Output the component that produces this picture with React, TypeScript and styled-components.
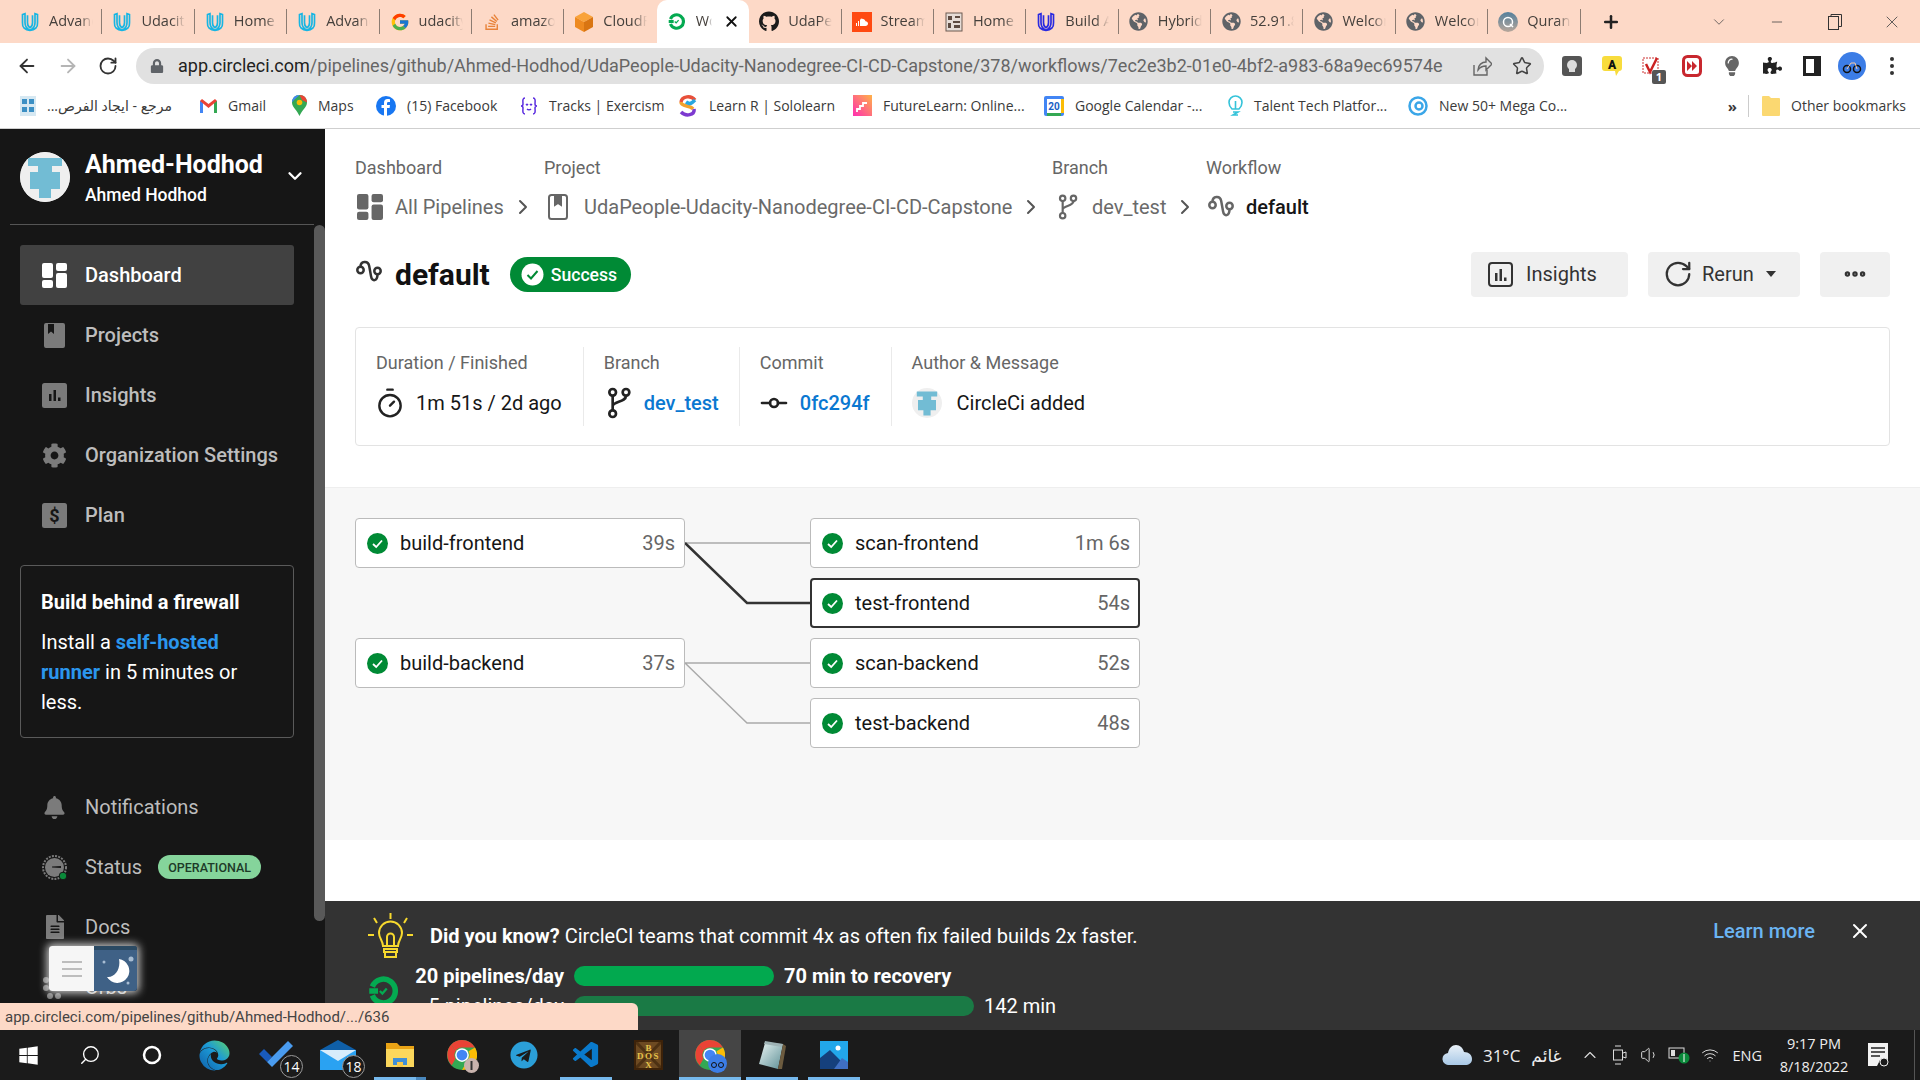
import React from "react";
import styled, { createGlobalStyle } from "styled-components";
import { ArrowLeft, ArrowRight, RotateCw, Star, ChevronDown, ChevronRight, Plus, X, Minus, Timer, GitCommitHorizontal, Search, ChevronUp, Volume1, Wifi, Ellipsis } from "lucide-react";
import { FaLock, FaStackOverflow, FaGithub, FaGlobeAmericas, FaPuzzlePiece, FaLightbulb, FaCog, FaBell, FaFileAlt, FaWindows, FaEdge, FaTelegram } from "react-icons/fa";
import { FcGoogle } from "react-icons/fc";
import { VscVscode } from "react-icons/vsc";

const Global = createGlobalStyle`
  * { box-sizing: border-box; }
  html, body { margin: 0; padding: 0; background: #fff; }
  body { font-family: Roboto, "DejaVu Sans", sans-serif; overflow: hidden; }
`;
const CHROME_FONT = `"Open Sans", "DejaVu Sans", sans-serif`;

const Page = styled.div`width:1920px;height:1080px;display:flex;flex-direction:column;position:relative;overflow:hidden;`;

/* browser chrome */
const TabStrip = styled.div`height:43px;flex:none;background:#fdd9c7;display:flex;align-items:stretch;padding-left:10px;font-family:${CHROME_FONT};`;
const Tab = styled.div<{ $active?: boolean }>`width:92.4px;flex:none;height:43px;padding:9px 0;background:${p => p.$active ? "#fff" : "transparent"};border-radius:${p => p.$active ? "10px 10px 0 0" : "0"};`;
const TabInner = styled.div<{ $sep?: boolean }>`height:25px;display:flex;align-items:center;gap:9px;padding-left:10px;padding-right:8px;border-right:1px solid ${p => p.$sep ? "#8c7c72" : "transparent"};`;
const TabIconBox = styled.span`width:20px;height:22px;flex:none;display:flex;align-items:center;justify-content:center;`;
const TabText = styled.span<{ $w?: number }>`font-size:14.5px;line-height:20px;margin-top:-2px;color:#45403c;white-space:nowrap;overflow:hidden;width:${p => p.$w ?? 44}px;-webkit-mask-image:linear-gradient(90deg,#000 70%,transparent);mask-image:linear-gradient(90deg,#000 70%,transparent);`;
const TabClose = styled.span`display:flex;margin-left:2px;color:#111;`;
const NewTab = styled.span`display:flex;align-items:center;margin-left:20px;color:#222;`;
const WindowButtons = styled.div`margin-left:auto;display:flex;align-items:center;color:#444;`;
const WindowButton = styled.span<{ $w: number }>`width:${p => p.$w}px;display:flex;justify-content:center;`;

const Toolbar = styled.div`height:43px;flex:none;background:#fff;display:flex;align-items:center;padding:2px 0 0 16px;font-family:${CHROME_FONT};`;
const NavButton = styled.span<{ $c?: string }>`width:41px;display:flex;justify-content:flex-start;color:${p => p.$c ?? "#333"};`;
const AddressBar = styled.div`width:1408px;flex:none;height:36px;margin-left:-3px;border-radius:18px;background:#e1e1e1;display:flex;align-items:center;padding-left:14px;padding-right:12px;color:#555;`;
const Url = styled.span`margin-left:14px;font-family:Roboto,sans-serif;font-size:18px;color:#666;white-space:nowrap;`;
const UrlHost = styled.span`color:#222;`;
const AddressActions = styled.span`margin-left:auto;display:flex;gap:20px;color:#555;align-items:center;`;
const Extensions = styled.div`display:flex;align-items:center;margin-left:8px;`;
const ExtSlot = styled.span`width:40px;height:36px;display:flex;align-items:center;justify-content:center;position:relative;`;
const ExtBadge = styled.span`position:absolute;right:6px;bottom:0;width:14px;height:14px;background:#555;border-radius:2px;color:#fff;font-size:11px;font-weight:700;display:flex;align-items:center;justify-content:center;`;

const BookmarkBar = styled.div`height:43px;flex:none;background:#fff;border-bottom:1px solid #cfcfcf;display:flex;align-items:center;padding:0 0 3px 20px;font-family:${CHROME_FONT};font-size:14px;color:#3a3a3a;`;
const Bookmark = styled.span<{ $w: number }>`width:${p => p.$w}px;flex:none;display:flex;align-items:center;gap:11px;white-space:nowrap;overflow:hidden;`;
const OverflowMark = styled.span`margin-left:auto;font-weight:700;font-size:15px;margin-right:11px;`;
const BarSep = styled.span`width:1px;height:22px;background:#ccc;margin-right:13px;`;
const OtherBookmarks = styled.span`display:flex;align-items:center;gap:11px;width:158px;white-space:nowrap;`;

/* body */
const Body = styled.div`flex:1;min-height:0;display:flex;`;
const Sidebar = styled.aside`width:325px;flex:none;background:#161616;display:flex;flex-direction:column;overflow:hidden;`;
const OrgHeader = styled.div`height:96px;flex:none;margin:0 11px 0 10px;border-bottom:1px solid #555;display:flex;align-items:center;padding:0 0 0 10px;`;
const Avatar = styled.span`width:50px;height:50px;border-radius:50%;background:#efefef;flex:none;display:flex;align-items:center;justify-content:center;overflow:hidden;`;
const OrgNames = styled.div`margin-left:15px;padding-top:3px;display:flex;flex-direction:column;gap:4px;color:#fff;flex:1;`;
const OrgName = styled.span`font-size:25px;font-weight:700;line-height:30px;`;
const OrgUser = styled.span`font-size:17.5px;font-weight:500;line-height:22px;`;
const OrgChevron = styled.span`display:flex;color:#fff;margin-right:8px;margin-top:-2px;`;
const SideBody = styled.div`flex:1;min-height:0;display:flex;`;
const SideNav = styled.nav`width:314px;flex:none;padding:20px 20px 0;`;
const ScrollTrack = styled.div`width:11px;flex:none;`;
const ScrollThumb = styled.div`height:696px;border-radius:6px;background:#595959;`;
const NavItem = styled.div<{ $active?: boolean; $plain?: boolean }>`height:60px;display:flex;align-items:center;gap:18px;padding-left:22px;border-radius:3px;font-size:20px;font-weight:${p => p.$plain ? 400 : 500};background:${p => p.$active ? "#414141" : "transparent"};color:${p => p.$active ? "#fff" : "#bdbdbd"};`;
const NavIcon = styled.span<{ $active?: boolean }>`width:25px;height:25px;flex:none;display:flex;align-items:center;justify-content:center;color:${p => p.$active ? "#fff" : "#7b7b7b"};`;
const FirewallBox = styled.div`margin-top:20px;height:173px;border:1px solid #5a5a5a;border-radius:4px;padding:21px 20px 0 20px;color:#fff;font-size:20px;line-height:30px;`;
const FirewallTitle = styled.div`font-weight:700;margin-bottom:10px;`;
const FirewallLink = styled.span`color:#2b96ed;font-weight:700;`;
const BottomNav = styled.div`margin-top:39px;`;
const StatusPill = styled.span`margin-left:-2px;height:24px;padding:0 10px;border-radius:12px;background:#85d49b;color:#1d3a28;font-size:12.5px;font-weight:500;display:flex;align-items:center;`;
const ThemeWidget = styled.div`position:absolute;left:49px;top:946px;width:88px;height:45px;display:flex;border-radius:3px;overflow:hidden;box-shadow:0 0 8px 2px rgba(255,255,255,.8);`;
const ThemeLeft = styled.div`width:45px;background:#f6f6f6;display:flex;flex-direction:column;align-items:center;justify-content:center;gap:5px;`;
const ThemeLine = styled.span`width:20px;height:2px;background:#bdbdbd;`;
const ThemeRight = styled.div`flex:1;background:#3f6186;border-top:4px solid #2b4a63;display:flex;align-items:center;justify-content:center;`;

const Main = styled.main`flex:1;min-width:0;display:flex;flex-direction:column;background:#fff;`;
const Header = styled.section`height:358px;flex:none;padding:27px 30px 0;`;
const Crumbs = styled.div`display:flex;`;
const Crumb = styled.div<{ $w?: number }>`width:${p => p.$w ? p.$w + "px" : "auto"};flex:none;display:flex;flex-direction:column;gap:12px;`;
const CrumbLabel = styled.span`font-size:18px;line-height:24px;color:#666;`;
const CrumbRow = styled.div`height:30px;display:flex;align-items:center;font-size:20px;color:#6a6a6a;`;
const CrumbIcon = styled.span<{ $w: number }>`width:${p => p.$w}px;flex:none;display:flex;color:#666;padding-left:2px;`;
const CrumbCurrent = styled.span`color:#161616;font-weight:500;`;
const CrumbChevron = styled.span`display:flex;margin-left:auto;margin-right:9px;color:#555;`;
const TitleRow = styled.div`margin-top:30px;height:45px;display:flex;align-items:center;`;
const TitleIcon = styled.span`display:flex;margin:-6px 0 0 1px;color:#333;`;
const Title = styled.h1`margin:0 0 0 13px;font-size:30px;font-weight:700;color:#111;`;
const SuccessBadge = styled.span`margin-left:20px;height:35px;padding:0 14px 0 11px;border-radius:18px;background:#008a35;color:#fff;font-size:17.6px;font-weight:500;display:flex;align-items:center;gap:7px;`;
const Actions = styled.div`margin-left:auto;display:flex;gap:20px;`;
const ActionButton = styled.button<{ $w: number; $center?: boolean; $pad?: number; $gap?: number }>`width:${p => p.$w}px;height:45px;border:0;border-radius:4px;background:#f0f0f0;color:#333;font:400 20px Roboto,sans-serif;display:flex;align-items:center;justify-content:${p => p.$center ? "center" : "flex-start"};gap:${p => p.$gap ?? 0}px;padding:0 ${p => p.$pad ?? 0}px 1px;`;
const Caret = styled.span`width:0;height:0;border-left:5.5px solid transparent;border-right:5.5px solid transparent;border-top:6px solid #333;margin-left:3px;`;
const InfoCard = styled.div`margin-top:30px;height:119px;border:1px solid #e3e3e3;border-radius:4px;padding:19px 0;display:flex;`;
const InfoCol = styled.div<{ $right?: number }>`padding:0 ${p => p.$right ?? 20}px 0 20px;border-right:1px solid #eaeaea;display:flex;flex-direction:column;gap:13px;height:79px;&:last-child{border-right:0;}`;
const InfoLabel = styled.span`font-size:18px;line-height:24px;color:#666;padding-top:4px;`;
const InfoValue = styled.div<{ $gap?: number }>`height:30px;display:flex;align-items:center;gap:${p => p.$gap ?? 12}px;font-size:20px;color:#161616;`;
const InfoLink = styled.span`color:#0a78d1;font-weight:500;`;
const InfoIcon = styled.span`display:flex;color:#222;margin:0 -2px;`;

const GraphArea = styled.section`height:353px;flex:none;background:#f7f7f7;border-top:1px solid #eee;padding:30px 30px 0;`;
const Graph = styled.div`display:grid;grid-template-columns:330px 125px 330px;grid-auto-rows:50px;row-gap:10px;width:785px;`;
const Job = styled.div<{ $col: number; $row: number; $selected?: boolean }>`grid-column:${p => p.$col};grid-row:${p => p.$row};background:#fff;border:${p => p.$selected ? "2.5px solid #333" : "1px solid #bbb"};border-radius:4px;display:flex;align-items:center;padding:0 ${p => p.$selected ? 8 : 9}px 0 ${p => p.$selected ? 10 : 11}px;font-size:20px;color:#161616;`;
const JobName = styled.span`margin-left:12px;flex:1;`;
const JobTime = styled.span`color:#666;`;
const Connector = styled.svg`grid-column:2;grid-row:1 / span 4;width:125px;height:230px;`;

const Spacer = styled.div`flex:1;`;
const Banner = styled.section`height:129px;flex:none;background:#333;padding:12px 48px 0 43px;color:#fff;font-size:20px;overflow:hidden;`;
const BannerTop = styled.div`height:46px;display:flex;align-items:center;gap:17px;`;
const BannerText = styled.div`flex:1;margin-top:0;`;
const Strong = styled.strong`font-weight:700;`;
const LearnMore = styled.span`color:#6bb4f2;font-weight:500;margin-bottom:10px;`;
const BannerClose = styled.span`display:flex;margin:0 0 10px 16px;`;
const Metrics = styled.div`margin-top:7px;display:flex;`;
const MetricsIcon = styled.span`width:30px;flex:none;margin-top:10px;display:flex;`;
const MetricsRows = styled.div`display:grid;grid-template-columns:166px auto;column-gap:10px;row-gap:10px;grid-auto-rows:20px;align-items:center;`;
const MetricName = styled.span<{ $bold?: boolean }>`text-align:right;font-weight:${p => p.$bold ? 700 : 400};white-space:nowrap;`;
const MetricBarRow = styled.div`display:flex;align-items:center;gap:10px;`;
const MetricBar = styled.span<{ $w: number; $c: string }>`display:block;height:20px;width:${p => p.$w}px;border-radius:10px;background:${p => p.$c};`;
const MetricValue = styled.span<{ $bold?: boolean }>`font-weight:${p => p.$bold ? 700 : 400};white-space:nowrap;`;

const StatusTip = styled.div`position:absolute;left:0;bottom:50px;width:638px;height:27px;background:#fdd9c7;border-radius:0 6px 0 0;padding-left:5px;display:flex;align-items:center;font-size:15px;color:#444;font-family:Roboto,sans-serif;white-space:nowrap;`;

/* taskbar */
const Taskbar = styled.footer`height:50px;flex:none;background:#1b1b1b;display:flex;align-items:stretch;padding-left:0;color:#fff;font-family:${CHROME_FONT};`;
const TaskLeft = styled.div`display:flex;margin-left:-3px;`;
const TaskSlot = styled.div<{ $active?: boolean }>`width:62px;height:50px;position:relative;display:flex;align-items:center;justify-content:center;background:${p => p.$active ? "#454545" : "transparent"};`;
const TaskLine = styled.span<{ $full?: boolean; $stack?: boolean }>`position:absolute;bottom:0;left:${p => p.$full ? 0 : 5}px;right:${p => p.$full ? 0 : 5}px;height:3px;background:#76b9ed;border-right:${p => p.$stack ? "10px solid #4a88bd" : "0"};`;
const TaskBadge = styled.span`position:absolute;right:4px;bottom:2px;width:23px;height:23px;border-radius:50%;background:#1b1b1b;border:1px solid #999;font-size:14px;display:flex;align-items:center;justify-content:center;`;
const ChromeBadge = styled.span`position:absolute;right:14px;bottom:7px;display:flex;`;
const Tray = styled.div`margin-left:auto;display:flex;align-items:center;padding-right:5px;font-size:14.5px;color:#eee;`;
const Weather = styled.span`display:flex;align-items:center;gap:11px;font-size:17px;margin-right:14px;`;
const TrayIcon = styled.span<{ $w: number }>`width:${p => p.$w}px;display:flex;justify-content:center;color:#ddd;`;
const TrayLang = styled.span`margin-left:7px;`;
const TrayClock = styled.div`width:100px;display:flex;flex-direction:column;align-items:center;gap:3px;font-size:14.5px;line-height:20px;margin-left:2px;`;
const TrayNote = styled.span`display:flex;margin-left:4px;margin-right:25px;`;
const TrayEdge = styled.span`width:1px;height:50px;background:#555;`;

/* drawings */
const UdacityLogo = ({ c = "#17b5e3", s = 20 }: { c?: string; s?: number }) => (
  <svg width={s} height={s} viewBox="0 0 24 24" fill="none" stroke={c} strokeWidth="2"><path d="M3 3l3-1v11c0 4 2 7 6 9-6 0-9.500-4-9-9z" /><path d="M21 3l-3-1v11c0 4-2 7-6 9 6 0 9.500-4 9-9z" /><path d="M9 4v9c0 3 1 5 3 6 2-1 3-3 3-6V4" /></svg>
);
const CircleCiMark = ({ s = 20, c = "#04aa51" }: { s?: number; c?: string }) => (
  <svg width={s} height={s} viewBox="0 0 24 24" fill="none"><path d="M3.500 8.500a9.500 9.500 0 1 1 0 7" stroke={c} strokeWidth="4.400" /><path d="M1 12h7" stroke={c} strokeWidth="4.400" /><path d="M9.500 12l2 2 3.500-4" stroke={c} strokeWidth="1.800" /></svg>
);
const CloudBox = () => (
  <svg width="20" height="22" viewBox="0 0 20 22"><path d="M10 1l9 5-9 5-9-5z" fill="#f9a33a" /><path d="M1 6l9 5v10l-9-5z" fill="#ee8a20" /><path d="M19 6l-9 5v10l9-5z" fill="#d97512" /></svg>
);
const SoundBox = () => (
  <svg width="20" height="20" viewBox="0 0 20 20"><rect width="20" height="20" fill="#ff4a12" /><path d="M4 14v-3h1v3zm2 0V9h1v5zm2 0V8l1-1.500 1 .2c2 0 3 1 3.500 2.500 1.500 0 2.500 1 2.500 2.400s-1 2.400-2.500 2.400z" fill="#fff" /></svg>
);
const QrBox = () => (
  <svg width="18" height="20" viewBox="0 0 18 20"><rect x="1" y="1" width="16" height="18" fill="#e6dcd6" stroke="#6c5a50" /><path d="M3 4h4v4H3zm7 0h5v2h-5zM3 11h3v5H3zm5-2h7v2H8zm1 4h6v3H9z" fill="#5d4a40" /></svg>
);
const QuranLogo = () => (
  <svg width="20" height="20" viewBox="0 0 20 20"><defs><linearGradient id="qg" x1="0" y1="0" x2="0" y2="1"><stop offset="0" stopColor="#55809c" /><stop offset="1" stopColor="#b7a69a" /></linearGradient></defs><circle cx="10" cy="10" r="10" fill="url(#qg)" /><circle cx="10" cy="10" r="4.500" fill="none" stroke="#fff" strokeWidth="1.500" /><path d="M12 12l3 3" stroke="#fff" strokeWidth="1.500" /></svg>
);
const Chrome = ({ s = 20 }: { s?: number }) => (
  <svg width={s} height={s} viewBox="0 0 24 24"><circle cx="12" cy="12" r="12" fill="#34a853" /><path d="M12 0a12 12 0 0 1 10.400 6H12a6 6 0 0 0-5.200 3L3.400 3.600A12 12 0 0 1 12 0z" fill="#ea4335" /><path d="M3.400 3.600L6.800 9a6 6 0 0 0 0 6l-3 5.200A12 12 0 0 1 3.400 3.600z" fill="#ea4335" /><path d="M22.400 6A12 12 0 0 1 12 24l5.200-9a6 6 0 0 0 0-6z" fill="#fbbc05" /><circle cx="12" cy="12" r="5.500" fill="#fff" /><circle cx="12" cy="12" r="4.300" fill="#4285f4" /></svg>
);
const BranchIcon = ({ s = 24 }: { s?: number }) => (
  <svg width={s} height={s} viewBox="0 0 24 24" fill="none" stroke="currentColor" strokeWidth="2"><circle cx="8" cy="4" r="2.500" /><circle cx="18" cy="4" r="2.500" /><circle cx="8" cy="20" r="2.500" /><path d="M8 6.500v11M18 6.500c0 5-10 4-10 8" /></svg>
);
const WorkflowIcon = ({ s = 26 }: { s?: number }) => (
  <svg width={s} height={s} viewBox="0 0 26 26" fill="none" stroke="currentColor" strokeWidth="2.500"><circle cx="4.500" cy="11" r="3.200" /><circle cx="21.500" cy="12" r="3.200" /><path d="M4.500 7.800C4.500 2 12 1 13.200 7l1.800 10c1 6.500 6.500 5 6.500-1.800" /></svg>
);
const DashIcon = ({ s = 25 }: { s?: number }) => (
  <svg width={s} height={s} viewBox="0 0 25 25" fill="currentColor"><rect width="11" height="15" rx="2" /><rect y="17" width="11" height="8" rx="2" /><rect x="14" width="11" height="8" rx="2" /><rect x="14" y="10" width="11" height="15" rx="2" /></svg>
);
const ProjectIcon = () => (
  <svg width="21" height="25" viewBox="0 0 21 25"><path fillRule="evenodd" clipRule="evenodd" d="M2 0h17a2 2 0 0 1 2 2v21a2 2 0 0 1-2 2H2a2 2 0 0 1-2-2V2a2 2 0 0 1 2-2zm2 1v10l3-2.500L10 11V1z" fill="currentColor" /></svg>
);
const ChartSolid = () => (
  <svg width="25" height="25" viewBox="0 0 25 25"><rect width="25" height="25" rx="2.500" fill="currentColor" /><path d="M7 11h2.500v7H7zm4.500-4H14v11h-2.500zm4.500 7.500h2.500V18H16z" fill="#161616" /></svg>
);
const ChartOutline = () => (
  <svg width="25" height="25" viewBox="0 0 25 25" fill="none"><rect x="1" y="1" width="23" height="23" rx="3" stroke="#333" strokeWidth="2" /><path d="M7 11h2.500v8H7zm4.500-4H14v12h-2.500zm4.500 8.500h2.500V19H16z" fill="#333" /></svg>
);
const PlanIcon = () => (
  <svg width="25" height="25" viewBox="0 0 25 25"><rect width="25" height="25" rx="2.500" fill="currentColor" /><text x="12.500" y="19" textAnchor="middle" fontFamily="Roboto" fontWeight="700" fontSize="18" fill="#161616">$</text></svg>
);
const GaugeIcon = () => (
  <svg width="25" height="25" viewBox="0 0 25 25"><circle cx="12.500" cy="12.500" r="9.500" fill="#7b7b7b" /><circle cx="12.500" cy="12.500" r="11.500" fill="none" stroke="#7b7b7b" strokeWidth="2" strokeDasharray="2 1.200" /><path d="M10 11.500l9-.5v2l-9-.5z" fill="#161616" /><circle cx="21" cy="21" r="3.800" fill="#0a8a3a" stroke="#161616" /></svg>
);
const OrbsIcon = () => (
  <svg width="25" height="25" viewBox="0 0 25 25" fill="currentColor"><circle cx="4" cy="5" r="3" /><circle cx="12" cy="5" r="3" /><circle cx="20" cy="5" r="3" /><circle cx="4" cy="13" r="3" /><circle cx="12" cy="13" r="3" /><circle cx="20" cy="13" r="3" /><circle cx="8" cy="21" r="3" /><circle cx="16" cy="21" r="3" /></svg>
);
const Moon = () => (
  <svg width="40" height="38" viewBox="0 0 40 38"><circle cx="8" cy="10" r="1.500" fill="#a8bdd3" /><circle cx="35" cy="7" r="2.500" fill="#a8bdd3" /><circle cx="32" cy="31" r="1.500" fill="#a8bdd3" /><path d="M23 7a12 12 0 1 1-12 18c8 1 14-8 12-18z" fill="#fff" /></svg>
);
const AuthorAvatar = ({ s }: { s: number }) => (
  <svg width={s} height={s} viewBox="0 0 50 50"><circle cx="25" cy="25" r="25" fill="#efefef" /><path d="M8 6h34v8H32v6h8v17h-9v9H19v-9h-9V20h8v-6H8z" fill="#72bcd4" /></svg>
);
const GreenCheck = ({ s = 21 }: { s?: number }) => (
  <svg width={s} height={s} viewBox="0 0 21 21"><circle cx="10.500" cy="10.500" r="10.500" fill="#008a35" /><path d="M6 11l3.200 3L15 7.500" fill="none" stroke="#fff" strokeWidth="1.800" /></svg>
);
const Bulb = () => (
  <svg width="45" height="46" viewBox="0 0 45 46" fill="none" stroke="#f7d92e" strokeWidth="2"><path d="M22.500 0v6M6 5l3 5M39 5l-3 5M0 22h6M39 22h6" /><path d="M15 33c0-5-4-8-4-13a11.500 11.500 0 0 1 23 0c0 5-4 8-4 13z" /><path d="M19 33v-9a3.500 3.500 0 0 1 7 0v9M16 36h13v3H16zM17 39h11v5H17z" /></svg>
);
const CameraIco = () => <svg width="16" height="22" viewBox="0 0 16 22" fill="none" stroke="#ddd"><rect x="1.500" y="6" width="9" height="10" /><path d="M11 9l3-1v6l-3-1M3 2h6M3 20h6" /></svg>;
const BatteryIco = () => <svg width="24" height="18" viewBox="0 0 24 18"><rect x="1" y="2" width="15" height="10" fill="none" stroke="#ddd" /><rect x="3" y="4" width="4" height="6" fill="#ddd" /><circle cx="16" cy="12" r="5.500" fill="#0a8a3a" /><path d="M16 8v8" stroke="#fff" /></svg>;
const NoteIco = () => <svg width="21" height="24" viewBox="0 0 21 24"><path d="M0 0h20v17h-8l-3 6H0z" fill="#f2f2f2" /><path d="M3 5h14M3 9h14M3 13h9" stroke="#222" strokeWidth="1.500" /><circle cx="16" cy="19" r="4" fill="#1b1b1b" stroke="#eee" /></svg>;
const TodoIco = () => <svg width="34" height="30" viewBox="0 0 34 30"><path d="M0 14l5-5 8 8-5 5z" fill="#195abd" /><path d="M8 22L29 1l5 5-21 21z" fill="#4a9cf0" /></svg>;
const MailIco = () => <svg width="36" height="30" viewBox="0 0 36 30"><path d="M18 0l18 10H0z" fill="#0f5fa8" /><rect y="10" width="36" height="20" fill="#2aa2f2" /><path d="M0 10l18 11 18-11" fill="#d7ecfb" /></svg>;
const FolderIco = () => <svg width="28" height="28" viewBox="0 0 28 28"><path d="M0 2h11l3 3h14v6H0z" fill="#e9a315" /><rect y="8" width="28" height="18" fill="#fbd75c" /><path d="M7 17h14v7H7z" fill="#3f8fd6" /><path d="M11 21h6v5h-6z" fill="#f7c948" /></svg>;
const DosIco = () => <svg width="29" height="30" viewBox="0 0 29 30"><rect width="29" height="30" fill="#6d4a22" /><path d="M2 2L27 28M27 2L2 28" stroke="#4d3113" strokeWidth="3" /><rect x="1" y="1" width="27" height="28" fill="none" stroke="#3d2209" strokeWidth="2" /><text x="14.500" y="11" textAnchor="middle" fontSize="9" fill="#e5c34a" fontFamily="Liberation Serif" fontWeight="700">B</text><text x="14.500" y="19" textAnchor="middle" fontSize="9" letterSpacing="1.500" fill="#e5c34a" fontFamily="Liberation Serif" fontWeight="700">DOS</text><text x="14.500" y="28" textAnchor="middle" fontSize="9" fill="#e5c34a" fontFamily="Liberation Serif" fontWeight="700">X</text></svg>;
const NotepadIco = () => <svg width="28" height="30" viewBox="0 0 28 30"><defs><linearGradient id="np" x1="0" y1="0" x2="1" y2="1"><stop offset="0" stopColor="#e9f4f3" /><stop offset="1" stopColor="#5d8f95" /></linearGradient></defs><path d="M7 3l18 1-5 25-19-5z" fill="url(#np)" /><path d="M7 1l18 3-1 3L6 4z" fill="#9fb3b5" /><path d="M25 4l3 2-4 23-4 0z" fill="#6c5b3f" /></svg>;
const PhotosIco = () => <svg width="28" height="28" viewBox="0 0 28 28"><rect width="28" height="28" fill="#22a7ea" /><circle cx="18" cy="7" r="2.500" fill="#fff" /><path d="M0 28V17l10-8 12 12 6 0v7z" fill="#15407c" /><path d="M14 28l8-11 6 4v7z" fill="#3f6fc2" /></svg>;
const CloudIco = () => <svg width="30" height="20" viewBox="0 0 30 20"><defs><linearGradient id="cl" x1="0" y1="0" x2="0" y2="1"><stop offset="0" stopColor="#e9f1f8" /><stop offset="1" stopColor="#a8c8e6" /></linearGradient></defs><path d="M7 20a6 6 0 0 1-1-12c1-5 4-8 8-8 4 0 7 3 8 7 5 0 8 3 8 7s-3 6-7 6z" fill="url(#cl)" /></svg>;
const EdgeDefs = () => <svg width="0" height="0"><defs><linearGradient id="edgeG" x1="0" y1="1" x2="1" y2="0"><stop offset="0" stopColor="#0f5ea8" /><stop offset=".55" stopColor="#1c9ad6" /><stop offset="1" stopColor="#5ed36b" /></linearGradient></defs></svg>;

const TABS: { label: string; icon: React.ReactNode; sep?: boolean }[] = [
  { label: "Advanced", icon: <UdacityLogo />, sep: true },
  { label: "Udacity", icon: <UdacityLogo />, sep: true },
  { label: "Home", icon: <UdacityLogo />, sep: true },
  { label: "Advanced", icon: <UdacityLogo />, sep: true },
  { label: "udacity", icon: <FcGoogle size={20} />, sep: true },
  { label: "amazon", icon: <FaStackOverflow size={18} color="#e8833a" />, sep: true },
  { label: "CloudFr", icon: <CloudBox /> },
];
const TABS_AFTER: { label: string; icon: React.ReactNode; sep?: boolean }[] = [
  { label: "UdaPeo", icon: <FaGithub size={21} color="#1b1b1b" /> , sep: true },
  { label: "Stream", icon: <SoundBox />, sep: true },
  { label: "Home", icon: <QrBox />, sep: true },
  { label: "Build A", icon: <UdacityLogo c="#2a2ae0" />, sep: true },
  { label: "Hybrid", icon: <FaGlobeAmericas size={19} color="#5f6368" />, sep: true },
  { label: "52.91.8", icon: <FaGlobeAmericas size={19} color="#5f6368" />, sep: true },
  { label: "Welcome", icon: <FaGlobeAmericas size={19} color="#5f6368" />, sep: true },
  { label: "Welcome", icon: <FaGlobeAmericas size={19} color="#5f6368" />, sep: true },
  { label: "Quran", icon: <QuranLogo />, sep: true },
];

const BOOKMARKS: { w: number; label: string; icon: React.ReactNode; rtl?: boolean }[] = [
  { w: 180, label: "مرجع - ايجاد الفرص...", rtl: true, icon: <svg width="16" height="20" viewBox="0 0 16 20"><rect width="16" height="20" fill="#d6e8f2" /><path d="M2 3h5v5H2zm7 0h5v5H9zM2 11h5v5H2zm7 0h5v5H9z" fill="#3b8fc4" /></svg> },
  { w: 92, label: "Gmail", icon: <svg width="17" height="14" viewBox="0 0 17 14"><path d="M0 14V2l3-1v13z" fill="#4285f4" /><path d="M14 14V1l3 1v12z" fill="#34a853" /><path d="M0 2l2-2 6.500 5L15 0l2 2-8.500 7z" fill="#ea4335" /></svg> },
  { w: 84, label: "Maps", icon: <svg width="15" height="21" viewBox="0 0 15 21"><path d="M7.500 0C3 0 0 3 0 7.500 0 12 5 15 7.500 21 10 15 15 12 15 7.500 15 3 12 0 7.500 0z" fill="#34a853" /><path d="M0 7.500C0 3 3 0 7.500 0L2 5z" fill="#4285f4" /><path d="M7.500 0C12 0 15 3 15 7.500L10 5z" fill="#ea4335" /><circle cx="7.500" cy="7.500" r="2.800" fill="#fbbc05" /></svg> },
  { w: 144, label: "(15) Facebook", icon: <svg width="20" height="20" viewBox="0 0 20 20"><circle cx="10" cy="10" r="10" fill="#1877f2" /><path d="M11 20v-8h2.600l.4-3h-3V7.500c0-1 .4-1.500 1.500-1.500H14V3.200C13 3 12.300 3 11.500 3 9.200 3 8 4.500 8 7v2H5.500v3H8v8z" fill="#fff" /></svg> },
  { w: 158, label: "Tracks | Exercism", icon: <svg width="18" height="20" viewBox="0 0 18 20" fill="none" stroke="#5c2ee0" strokeWidth="1.500"><path d="M5 2C2 2 3 6 3 8s-2 2-2 2 2 0 2 2 -1 6 2 6M13 2c3 0 2 4 2 6s2 2 2 2-2 0-2 2 1 6-2 6M6 8l1 1 1-1M10 8l1 1 1-1M7 13c1 1 3 1 4 0" /></svg> },
  { w: 175, label: "Learn R | Sololearn", icon: <svg width="20" height="22" viewBox="0 0 20 22" fill="none" strokeWidth="3.500"><path d="M17 5C13 0 4 1 3 7" stroke="#e8503a" /><path d="M3 7c0 5 9 3 12 7" stroke="#f2a22d" /><path d="M16 14c1 6-8 8-13 3" stroke="#7d3ad0" /><path d="M8 7c4 3 6 1 9-2" stroke="#28a7e0" /></svg> },
  { w: 191, label: "FutureLearn: Online...", icon: <svg width="19" height="21" viewBox="0 0 19 21"><defs><linearGradient id="fl" x1="0" y1="1" x2="1" y2="0"><stop offset="0" stopColor="#ff2db1" /><stop offset="1" stopColor="#ffb347" /></linearGradient></defs><rect width="19" height="21" fill="url(#fl)" /><path d="M4 17v-3h3v-3h3V8h4" stroke="#fff" strokeWidth="1.800" fill="none" /></svg> },
  { w: 184, label: "Google Calendar -...", icon: <svg width="20" height="20" viewBox="0 0 20 20"><rect width="20" height="20" rx="2" fill="#4285f4" /><rect x="3" y="3" width="14" height="14" fill="#fff" /><path d="M3 17h14v3H3z" fill="#34a853" /><path d="M17 3h3v14h-3z" fill="#fbbc05" /><text x="10" y="14" textAnchor="middle" fontSize="10" fontWeight="700" fill="#1a60c4" fontFamily="Roboto">20</text></svg> },
  { w: 180, label: "Talent Tech Platfor...", icon: <svg width="15" height="21" viewBox="0 0 15 21" fill="none" stroke="#35c3d9" strokeWidth="1.600"><path d="M4 14C2 12 1 10 1 7.500a6.500 6.500 0 0 1 13 0c0 2.500-1 4.500-3 6.500z" /><path d="M7.500 6v8M5 17h5l-5 3h5" /></svg> },
  { w: 170, label: "New 50+ Mega Co...", icon: <svg width="20" height="20" viewBox="0 0 20 20" fill="none" stroke="#3aa6e8" strokeWidth="2.500"><circle cx="10" cy="10" r="8.500" /><circle cx="11" cy="10" r="3.500" /></svg> },
];

const JOBS = [
  { col: 1, row: 1, name: "build-frontend", time: "39s" },
  { col: 3, row: 1, name: "scan-frontend", time: "1m 6s" },
  { col: 3, row: 2, name: "test-frontend", time: "54s", selected: true },
  { col: 1, row: 3, name: "build-backend", time: "37s" },
  { col: 3, row: 3, name: "scan-backend", time: "52s" },
  { col: 3, row: 4, name: "test-backend", time: "48s" },
];

export default function App() {
  return (
    <Page>
      <Global />
      <TabStrip>
        {TABS.map((t, i) => (
          <Tab key={i}><TabInner $sep={t.sep}><TabIconBox>{t.icon}</TabIconBox><TabText>{t.label}</TabText></TabInner></Tab>
        ))}
        <Tab $active><TabInner><TabIconBox><CircleCiMark s={17} /></TabIconBox><TabText $w={20}>Workflow</TabText><TabClose><X size={17} strokeWidth={2.5} /></TabClose></TabInner></Tab>
        {TABS_AFTER.map((t, i) => (
          <Tab key={i}><TabInner $sep={t.sep}><TabIconBox>{t.icon}</TabIconBox><TabText>{t.label}</TabText></TabInner></Tab>
        ))}
        <NewTab><Plus size={20} strokeWidth={3} /></NewTab>
        <WindowButtons>
          <WindowButton $w={58}><ChevronDown size={18} strokeWidth={1} /></WindowButton>
          <WindowButton $w={58}><Minus size={16} strokeWidth={1.2} /></WindowButton>
          <WindowButton $w={58}><svg width="14" height="16" viewBox="0 0 14 16" fill="none" stroke="#333"><rect x=".5" y="2.500" width="10" height="13" /><path d="M3 2.500V.5h10.500v12H11" /></svg></WindowButton>
          <WindowButton $w={56}><X size={20} strokeWidth={1} /></WindowButton>
        </WindowButtons>
      </TabStrip>

      <Toolbar>
        <NavButton><ArrowLeft size={22} strokeWidth={2} /></NavButton>
        <NavButton $c="#b5b5b5"><ArrowRight size={22} strokeWidth={2} /></NavButton>
        <NavButton><RotateCw size={20} strokeWidth={2.2} /></NavButton>
        <AddressBar>
          <FaLock size={14} color="#5f6368" />
          <Url><UrlHost>app.circleci.com</UrlHost>/pipelines/github/Ahmed-Hodhod/UdaPeople-Udacity-Nanodegree-CI-CD-Capstone/378/workflows/7ec2e3b2-01e0-4bf2-a983-68a9ec69574e</Url>
          <AddressActions>
            <svg width="20" height="20" viewBox="0 0 20 20" fill="none" stroke="#666" strokeWidth="1.400"><path d="M2 9v10h13v-5" /><path d="M6 14c0-5 4-8 8-8V2l6 6-6 6v-4c-3 0-6 1-8 4z" /></svg>
            <Star size={20} strokeWidth={1.8} color="#444" />
          </AddressActions>
        </AddressBar>
        <Extensions>
          <ExtSlot><svg width="20" height="20" viewBox="0 0 20 20"><rect width="20" height="20" rx="3" fill="#555" /><circle cx="10" cy="9" r="5" fill="#ddd" /><rect x="7" y="13" width="6" height="3" fill="#ddd" /></svg></ExtSlot>
          <ExtSlot><svg width="20" height="20" viewBox="0 0 20 20"><path d="M3 0h14a3 3 0 0 1 3 3v9a3 3 0 0 1-3 3l-3 5-1-5H3a3 3 0 0 1-3-3V3a3 3 0 0 1 3-3z" fill="#f8dc3d" /><text x="10" y="13" textAnchor="middle" fontSize="12" fontWeight="900" fontFamily="Roboto" fill="#111">A</text></svg></ExtSlot>
          <ExtSlot><svg width="20" height="20" viewBox="0 0 20 20" fill="none"><rect x="1" y="2" width="15" height="15" stroke="#c33" strokeDasharray="2 1" /><path d="M4 8l4 8 7-14" stroke="#c22" strokeWidth="2.500" /></svg><ExtBadge>1</ExtBadge></ExtSlot>
          <ExtSlot><svg width="20" height="22" viewBox="0 0 20 22"><rect x="1.500" y="1.500" width="17" height="19" rx="4" fill="#fff" stroke="#c8272e" strokeWidth="3" /><path d="M5 6l5 5-5 5zm5 0l5 5-5 5z" fill="#c8272e" /></svg></ExtSlot>
          <ExtSlot><FaLightbulb size={20} color="#666" /></ExtSlot>
          <ExtSlot><FaPuzzlePiece size={19} color="#222" /></ExtSlot>
          <ExtSlot><svg width="18" height="20" viewBox="0 0 18 20"><path d="M0 0h18v20H0z" fill="#222" /><rect x="3" y="3" width="8" height="14" fill="#fff" /></svg></ExtSlot>
          <ExtSlot><svg width="28" height="28" viewBox="0 0 28 28"><circle cx="14" cy="14" r="14" fill="#3c7de6" /><circle cx="9" cy="17" r="3.500" fill="none" stroke="#111" strokeWidth="1.500" /><circle cx="19" cy="17" r="3.500" fill="none" stroke="#111" strokeWidth="1.500" /><path d="M9 17l4-6h4l2 6" stroke="#f4c9a4" fill="none" /></svg></ExtSlot>
          <ExtSlot><svg width="4" height="18" viewBox="0 0 4 18" fill="#333"><circle cx="2" cy="2" r="2" /><circle cx="2" cy="9" r="2" /><circle cx="2" cy="16" r="2" /></svg></ExtSlot>
        </Extensions>
      </Toolbar>

      <BookmarkBar>
        {BOOKMARKS.map((b, i) => (
          <Bookmark key={i} $w={b.w}>{b.icon}<span dir={b.rtl ? "rtl" : undefined}>{b.label}</span></Bookmark>
        ))}
        <OverflowMark>»</OverflowMark>
        <BarSep />
        <OtherBookmarks><svg width="18" height="20" viewBox="0 0 18 20"><path d="M1 0h6l2 2h8a1 1 0 0 1 1 1v16a1 1 0 0 1-1 1H1a1 1 0 0 1-1-1V1a1 1 0 0 1 1-1z" fill="#fbd871" /></svg>Other bookmarks</OtherBookmarks>
      </BookmarkBar>

      <Body>
        <Sidebar>
          <OrgHeader>
            <Avatar><AuthorAvatar s={50} /></Avatar>
            <OrgNames><OrgName>Ahmed-Hodhod</OrgName><OrgUser>Ahmed Hodhod</OrgUser></OrgNames>
            <OrgChevron><ChevronDown size={22} strokeWidth={2.5} /></OrgChevron>
          </OrgHeader>
          <SideBody>
            <SideNav>
              <NavItem $active><NavIcon $active><DashIcon /></NavIcon>Dashboard</NavItem>
              <NavItem><NavIcon><ProjectIcon /></NavIcon>Projects</NavItem>
              <NavItem><NavIcon><ChartSolid /></NavIcon>Insights</NavItem>
              <NavItem><NavIcon><FaCog size={25} /></NavIcon>Organization Settings</NavItem>
              <NavItem><NavIcon><PlanIcon /></NavIcon>Plan</NavItem>
              <FirewallBox>
                <FirewallTitle>Build behind a firewall</FirewallTitle>
                Install a <FirewallLink>self-hosted runner</FirewallLink> in 5 minutes or less.
              </FirewallBox>
              <BottomNav>
                <NavItem $plain><NavIcon><FaBell size={23} /></NavIcon>Notifications</NavItem>
                <NavItem $plain><NavIcon><GaugeIcon /></NavIcon>Status<StatusPill>OPERATIONAL</StatusPill></NavItem>
                <NavItem $plain><NavIcon><FaFileAlt size={24} /></NavIcon>Docs</NavItem>
                <NavItem $plain><NavIcon><OrbsIcon /></NavIcon>Orbs</NavItem>
              </BottomNav>
            </SideNav>
            <ScrollTrack><ScrollThumb /></ScrollTrack>
          </SideBody>
        </Sidebar>

        <Main>
          <Header>
            <Crumbs>
              <Crumb $w={189}>
                <CrumbLabel>Dashboard</CrumbLabel>
                <CrumbRow><CrumbIcon $w={40}><DashIcon s={26} /></CrumbIcon>All Pipelines<CrumbChevron><ChevronRight size={24} strokeWidth={2} /></CrumbChevron></CrumbRow>
              </Crumb>
              <Crumb $w={508}>
                <CrumbLabel>Project</CrumbLabel>
                <CrumbRow><CrumbIcon $w={40}><svg width="24" height="26" viewBox="0 0 24 26" fill="none" stroke="currentColor" strokeWidth="2"><rect x="3" y="1" width="18" height="24" rx="2.500" /><path d="M9 2v9l3-2 3 2V2z" fill="currentColor" /></svg></CrumbIcon>UdaPeople-Udacity-Nanodegree-CI-CD-Capstone<CrumbChevron><ChevronRight size={24} strokeWidth={2} /></CrumbChevron></CrumbRow>
              </Crumb>
              <Crumb $w={154}>
                <CrumbLabel>Branch</CrumbLabel>
                <CrumbRow><CrumbIcon $w={40}><BranchIcon s={26} /></CrumbIcon>dev_test<CrumbChevron><ChevronRight size={24} strokeWidth={2} /></CrumbChevron></CrumbRow>
              </Crumb>
              <Crumb>
                <CrumbLabel>Workflow</CrumbLabel>
                <CrumbRow><CrumbIcon $w={40}><WorkflowIcon /></CrumbIcon><CrumbCurrent>default</CrumbCurrent></CrumbRow>
              </Crumb>
            </Crumbs>
            <TitleRow>
              <TitleIcon><WorkflowIcon /></TitleIcon>
              <Title>default</Title>
              <SuccessBadge><svg width="23" height="23" viewBox="0 0 23 23"><circle cx="11.500" cy="11.500" r="11" fill="#fff" /><path d="M6.500 12l3.500 3.500 6.500-7.500" fill="none" stroke="#008a35" strokeWidth="2" /></svg>Success</SuccessBadge>
              <Actions>
                <ActionButton $w={157} $pad={17} $gap={13}><ChartOutline />Insights</ActionButton>
                <ActionButton $w={152} $pad={15} $gap={9}><RotateCw size={30} strokeWidth={1.8} />Rerun<Caret /></ActionButton>
                <ActionButton $w={70} $center><Ellipsis size={26} strokeWidth={3} /></ActionButton>
              </Actions>
            </TitleRow>
            <InfoCard>
              <InfoCol $right={21}>
                <InfoLabel>Duration / Finished</InfoLabel>
                <InfoValue><InfoIcon><Timer size={32} strokeWidth={1.8} /></InfoIcon>1m 51s / 2d ago</InfoValue>
              </InfoCol>
              <InfoCol>
                <InfoLabel>Branch</InfoLabel>
                <InfoValue><InfoIcon><BranchIcon s={32} /></InfoIcon><InfoLink>dev_test</InfoLink></InfoValue>
              </InfoCol>
              <InfoCol $right={21}>
                <InfoLabel>Commit</InfoLabel>
                <InfoValue><InfoIcon><GitCommitHorizontal size={32} strokeWidth={2} /></InfoIcon><InfoLink>0fc294f</InfoLink></InfoValue>
              </InfoCol>
              <InfoCol>
                <InfoLabel>Author &amp; Message</InfoLabel>
                <InfoValue $gap={15}><AuthorAvatar s={30} />CircleCi added</InfoValue>
              </InfoCol>
            </InfoCard>
          </Header>

          <GraphArea>
            <Graph>
              {JOBS.map(j => (
                <Job key={j.name} $col={j.col} $row={j.row} $selected={j.selected}>
                  <GreenCheck /><JobName>{j.name}</JobName><JobTime>{j.time}</JobTime>
                </Job>
              ))}
              <Connector viewBox="0 0 125 230" fill="none">
                <path d="M0 25H125M0 145H125M0 145L62 205H125" stroke="#aaa" strokeWidth="1.500" />
                <path d="M0 25L62 85H125" stroke="#333" strokeWidth="2.500" />
              </Connector>
            </Graph>
          </GraphArea>

          <Spacer />

          <Banner>
            <BannerTop>
              <Bulb />
              <BannerText><Strong>Did you know?</Strong> CircleCI teams that commit 4x as often fix failed builds 2x faster.</BannerText>
              <LearnMore>Learn more</LearnMore>
              <BannerClose><X size={24} strokeWidth={2} /></BannerClose>
            </BannerTop>
            <Metrics>
              <MetricsIcon><CircleCiMark s={30} /></MetricsIcon>
              <MetricsRows>
                <MetricName $bold>20 pipelines/day</MetricName>
                <MetricBarRow><MetricBar $w={200} $c="#02a94f" /><MetricValue $bold>70 min to recovery</MetricValue></MetricBarRow>
                <MetricName>5 pipelines/day</MetricName>
                <MetricBarRow><MetricBar $w={400} $c="#1a7a45" /><MetricValue>142 min</MetricValue></MetricBarRow>
              </MetricsRows>
            </Metrics>
          </Banner>
        </Main>
      </Body>

      <Taskbar>
        <TaskLeft>
          <TaskSlot><FaWindows size={21} /></TaskSlot>
          <TaskSlot><Search size={22} strokeWidth={1.5} transform="scale(-1,1)" /></TaskSlot>
          <TaskSlot><svg width="20" height="20" viewBox="0 0 20 20" fill="none" stroke="#fff" strokeWidth="2.500"><circle cx="10" cy="10" r="8" /></svg></TaskSlot>
          <TaskSlot><EdgeDefs /><FaEdge size={31} fill="url(#edgeG)" /></TaskSlot>
          <TaskSlot><TodoIco /><TaskBadge>14</TaskBadge></TaskSlot>
          <TaskSlot><MailIco /><TaskBadge>18</TaskBadge></TaskSlot>
          <TaskSlot><FolderIco /><TaskLine $stack /></TaskSlot>
          <TaskSlot><Chrome s={30} /><ChromeBadge><svg width="15" height="15" viewBox="0 0 15 15"><circle cx="7.500" cy="7.500" r="7.500" fill="#c9b3ad" /><path d="M7.500 3v9" stroke="#333" strokeWidth="2" /></svg></ChromeBadge></TaskSlot>
          <TaskSlot><FaTelegram size={28} color="#2b9fd8" /></TaskSlot>
          <TaskSlot><VscVscode size={31} color="#0a7acc" /><TaskLine /></TaskSlot>
          <TaskSlot><DosIco /></TaskSlot>
          <TaskSlot $active><Chrome s={30} /><ChromeBadge><svg width="19" height="19" viewBox="0 0 19 19"><circle cx="9.500" cy="9.500" r="9.500" fill="#3c7de6" /><circle cx="6" cy="11" r="2.500" fill="none" stroke="#111" /><circle cx="13" cy="11" r="2.500" fill="none" stroke="#111" /></svg></ChromeBadge><TaskLine $full /></TaskSlot>
          <TaskSlot><NotepadIco /><TaskLine /></TaskSlot>
          <TaskSlot><PhotosIco /><TaskLine /></TaskSlot>
        </TaskLeft>
        <Tray>
          <Weather><CloudIco /><span>31°C</span><span>غائم</span></Weather>
          <TrayIcon $w={30}><ChevronUp size={20} strokeWidth={1.3} /></TrayIcon>
          <TrayIcon $w={30}><CameraIco /></TrayIcon>
          <TrayIcon $w={30}><Volume1 size={20} strokeWidth={1.2} /></TrayIcon>
          <TrayIcon $w={30}><BatteryIco /></TrayIcon>
          <TrayIcon $w={30}><Wifi size={18} strokeWidth={1.3} /></TrayIcon>
          <TrayLang>ENG</TrayLang>
          <TrayClock><span>9:17 PM</span><span>8/18/2022</span></TrayClock>
          <TrayNote><NoteIco /></TrayNote>
          <TrayEdge />
        </Tray>
      </Taskbar>

      <ThemeWidget>
        <ThemeLeft><ThemeLine /><ThemeLine /><ThemeLine /></ThemeLeft>
        <ThemeRight><Moon /></ThemeRight>
      </ThemeWidget>
      <StatusTip>app.circleci.com/pipelines/github/Ahmed-Hodhod/.../636</StatusTip>
    </Page>
  );
}
